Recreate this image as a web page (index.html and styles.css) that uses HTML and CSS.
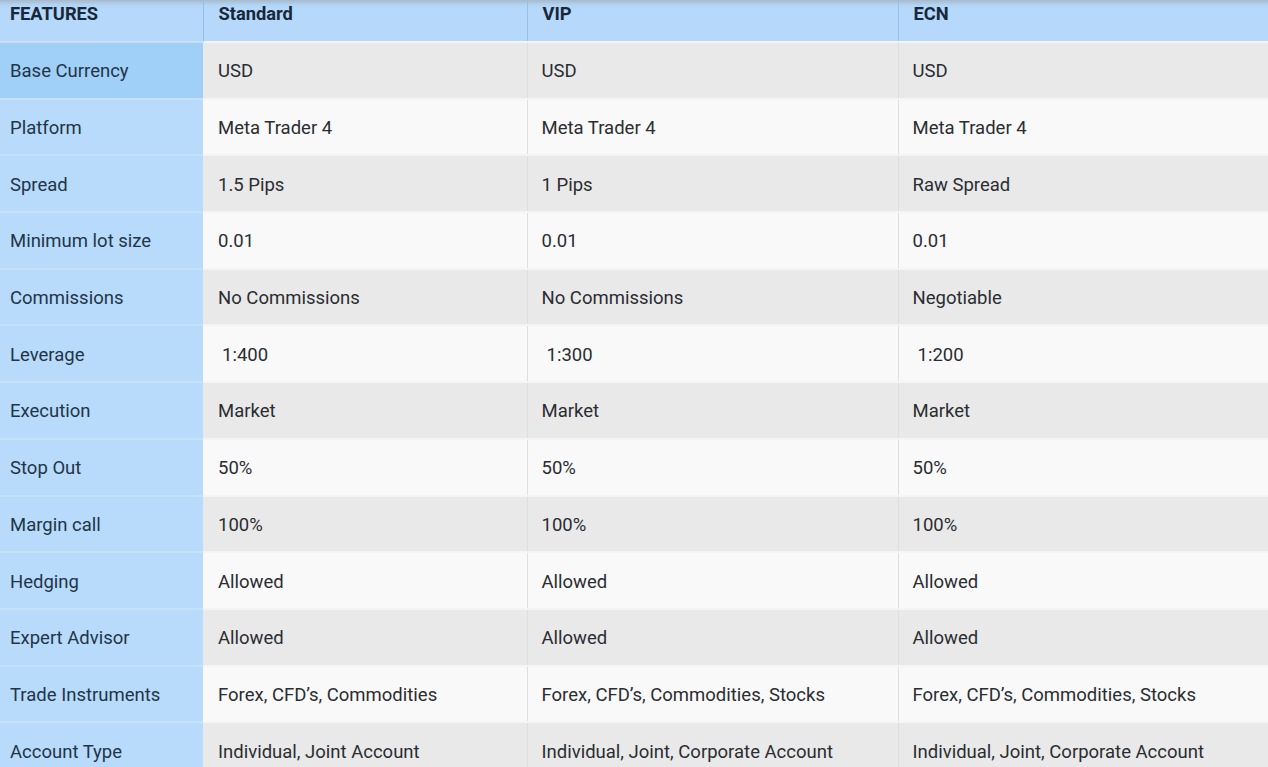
FILE: index.html
```html
<!DOCTYPE html>
<html>
<head>
<meta charset="utf-8">
<link rel="stylesheet" href="styles.css">
</head>
<body>
<table class="cmp">
  <colgroup>
    <col class="c-feat"><col class="c-std"><col class="c-vip"><col class="c-ecn">
  </colgroup>
  <thead>
    <tr><th>FEATURES</th><th>Standard</th><th>VIP</th><th>ECN</th></tr>
  </thead>
  <tbody>
    <tr class="active"><td class="feat">Base Currency</td><td>USD</td><td>USD</td><td>USD</td></tr>
    <tr><td class="feat">Platform</td><td>Meta Trader 4</td><td>Meta Trader 4</td><td>Meta Trader 4</td></tr>
    <tr><td class="feat">Spread</td><td>1.5 Pips</td><td>1 Pips</td><td>Raw Spread</td></tr>
    <tr><td class="feat">Minimum lot size</td><td>0.01</td><td>0.01</td><td>0.01</td></tr>
    <tr><td class="feat">Commissions</td><td>No Commissions</td><td>No Commissions</td><td>Negotiable</td></tr>
    <tr><td class="feat">Leverage</td><td class="sp">1:400</td><td class="sp">1:300</td><td class="sp">1:200</td></tr>
    <tr><td class="feat">Execution</td><td>Market</td><td>Market</td><td>Market</td></tr>
    <tr><td class="feat">Stop Out</td><td>50%</td><td>50%</td><td>50%</td></tr>
    <tr><td class="feat">Margin call</td><td>100%</td><td>100%</td><td>100%</td></tr>
    <tr><td class="feat">Hedging</td><td>Allowed</td><td>Allowed</td><td>Allowed</td></tr>
    <tr><td class="feat">Expert Advisor</td><td>Allowed</td><td>Allowed</td><td>Allowed</td></tr>
    <tr><td class="feat">Trade Instruments</td><td>Forex, CFD’s, Commodities</td><td>Forex, CFD’s, Commodities, Stocks</td><td>Forex, CFD’s, Commodities, Stocks</td></tr>
    <tr><td class="feat">Account Type</td><td>Individual, Joint Account</td><td>Individual, Joint, Corporate Account</td><td>Individual, Joint, Corporate Account</td></tr>
  </tbody>
</table>
</body>
</html>
```
FILE: styles.css
```css
html, body {
  margin: 0;
  padding: 0;
  background: #f9f9f9;
  overflow: hidden;
}
body {
  font-family: Roboto, "Liberation Sans", Arial, sans-serif;
  color: #2a2d31;
}
.cmp {
  width: 1268px;
  border-collapse: collapse;
  table-layout: fixed;
}
.c-feat { width: 203px; }
.c-std { width: 324px; }
.c-vip { width: 371px; }
.c-ecn { width: 370px; }

.cmp thead th {
  height: 41px;
  padding: 0 0 14px 15px;
  box-sizing: border-box;
  text-align: left;
  vertical-align: top;
  font-size: 18.3px;
  font-weight: 700;
  color: #17283a;
  line-height: 27px;
  background: linear-gradient(to bottom, #a7b9ca 0px, #b1d4f5 5px, #b5d8fb 9px, #b5d8fb 100%);
  border-left: 1px solid #93c1ea;
}
.cmp thead th:first-child {
  padding-left: 10px;
  border-left: none;
}
.cmp td {
  height: 56.7px;
  padding: 2px 0 0 14px;
  box-sizing: border-box;
  font-size: 18.5px;
  line-height: 20px;
  vertical-align: middle;
  border-left: 1px solid #dedede;
  border-top: 2px solid #f4f4f4;
  white-space: nowrap;
}
.cmp td:nth-child(2) { padding-left: 15px; border-left: none; }
.cmp tbody tr:nth-child(odd) td { background: #e9e9e9; }
.cmp tbody tr:nth-child(even) td { background: #f9f9f9; }
.cmp tbody tr td.feat {
  padding-left: 10px;
  background: #b8dbfb;
  color: #1f3548;
  border-left: none;
  border-top: 2px solid #c6e2fb;
}
.cmp tbody tr.active td.feat { background: #a0cff8; }
.cmp td.sp { padding-left: 19px; }
.cmp td:nth-child(2).sp { padding-left: 19px; }
```
